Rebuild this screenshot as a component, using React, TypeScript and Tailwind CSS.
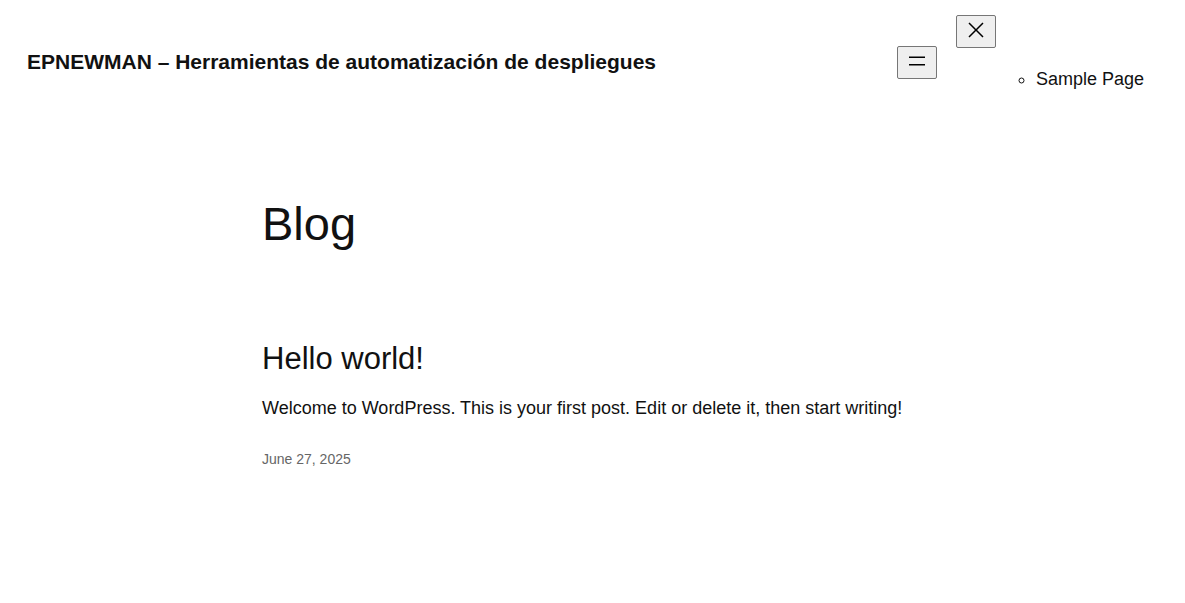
export default function App() {
  return (
    <div className="bg-white font-['Liberation_Sans',Arial,sans-serif] text-lg leading-[29px] text-[#111111]">
      <header className="flex items-start justify-between pt-[15px] pr-[41px] pl-[27px]">
        <p className="pt-8 text-[21px] font-bold leading-[29px]">
          <a href="#">EPNEWMAN – Herramientas de automatización de despliegues</a>
        </p>
        <nav aria-label="Main" className="flex items-start">
          <button type="button" aria-label="Open menu" className="mt-[31px] mr-[19px] flex h-[33px] w-10 justify-center rounded-[2px] border border-[#767676] bg-[#efefef] pt-[2px]">
            <svg width="24" height="24" viewBox="0 0 24 24" aria-hidden="true">
              <path d="M4 7.5h16v1.5H4zM4 15h16v1.5H4z" fill="#000" />
            </svg>
          </button>
          <button type="button" aria-label="Close menu" className="flex h-[33px] w-10 justify-center rounded-[2px] border border-[#767676] bg-[#efefef] pt-[2px]">
            <svg width="24" height="24" viewBox="0 0 24 24" aria-hidden="true">
              <path d="m13.06 12 6.47-6.47-1.06-1.06L12 10.94 5.53 4.47 4.47 5.53 10.94 12l-6.47 6.47 1.06 1.06L12 13.06l6.47 6.47 1.06-1.06L13.06 12Z" fill="#000" />
            </svg>
          </button>
          <ul className="mt-[50px] list-[circle] pl-10">
            <li>
              <a href="#">Sample Page</a>
            </li>
          </ul>
        </nav>
      </header>
      <main className="mx-auto w-full max-w-[661px] pt-[103px]">
        <h1 className="text-[47px] font-normal leading-[54px]">Blog</h1>
        <article className="pt-[90px]">
          <h2 className="text-[31px] font-normal leading-9">
            <a href="#">Hello world!</a>
          </h2>
          <p className="mt-[17px]">Welcome to WordPress. This is your first post. Edit or delete it, then start writing!</p>
          <time dateTime="2025-06-27" className="mt-[26px] block text-sm leading-5 text-[#666666]">
            <a href="#">June 27, 2025</a>
          </time>
        </article>
      </main>
    </div>
  );
}
